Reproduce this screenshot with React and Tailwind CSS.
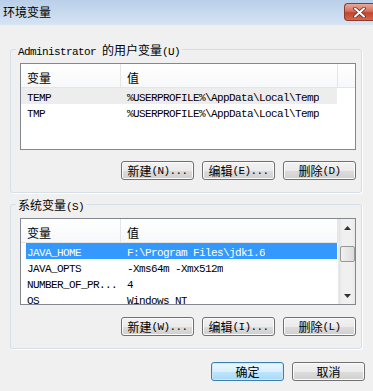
import React from 'react';

const CJK = /([\u4e00-\u9fff]+)/;

// SimSun-like mix: CJK in Noto, ASCII in a 6px-advance mono
function Mixed({ text }) {
    return text.split(CJK).map((p, i) =>
        CJK.test(p) ? (
            <span key={i} className="font-['Noto_Sans_CJK_SC',sans-serif] text-[12px]">{p}</span>
        ) : (
            p && <span key={i} className="font-['Liberation_Mono','Noto_Sans_CJK_SC',monospace] text-[11px] tracking-[-0.6px]">{p}</span>
        )
    );
}

function Btn({ label, def }) {
    return (
        <div
            className={`h-[19px] w-[73px] rounded-[3px] border flex items-center justify-center leading-[14px] text-black ${
                def
                    ? 'border-[#3c7fb1] bg-[linear-gradient(to_bottom,#eaf6fd_0%,#d9f0fc_50%,#bee6fd_50%,#a7d9f5_100%)] shadow-[inset_0_0_0_1px_#cbe8f8]'
                    : 'border-[#707070] bg-[linear-gradient(to_bottom,#f2f2f2_0%,#ebebeb_50%,#dddddd_50%,#cfcfcf_100%)] shadow-[inset_0_0_0_1px_#fcfcfc]'
            }`}
        >
            <Mixed text={label} />
        </div>
    );
}

function Header({ full }) {
    return (
        <div className="h-[24px] flex border-b border-[#e5e5e5] bg-[linear-gradient(to_bottom,#ffffff,#f7f8fa)] font-['Noto_Sans_CJK_SC',sans-serif] text-[12px] leading-[24px] text-black shrink-0">
            <div className="w-[100px] pl-[6px] pt-[2px] border-r border-[#e5e5e5]">变量</div>
            <div className="w-[217px] pl-[6px] pt-[2px] border-r border-[#e5e5e5]">值</div>
            {full && <div className="flex-1" />}
        </div>
    );
}

function Row({ name, value, mode }) {
    const bg =
        mode === 'sel'
            ? 'bg-[#3399ff] text-white ml-[5px] w-[311px]'
            : mode === 'gray'
            ? 'bg-[#ededed] text-black w-[316px]'
            : 'text-black w-[316px]';
    return (
        <div className={`h-[16px] flex items-center leading-[16px] shrink-0 ${bg}`}>
            <div className={`${mode === 'sel' ? 'w-[95px] pl-[1px]' : 'w-[100px] pl-[6px]'} whitespace-nowrap overflow-hidden`}>
                <Mixed text={name} />
            </div>
            <div className="pl-[6px] whitespace-nowrap overflow-hidden">
                <Mixed text={value} />
            </div>
        </div>
    );
}

function Scrollbar() {
    return (
        <div className="w-[17px] h-full flex flex-col items-center bg-[linear-gradient(to_right,#e3e3e3,#f0f0f0_20%,#f0f0f0_80%,#e8e8e8)] border-l border-[#e8e8e8]">
            <div className="h-[17px] w-full flex items-center justify-center">
                <svg width="7" height="4" viewBox="0 0 7 4"><path d="M0 4 L3.5 0 L7 4 Z" fill="#333" /></svg>
            </div>
            <div className="mt-[10px] h-[16px] w-[15px] rounded-[2px] border border-[#979797] bg-[linear-gradient(to_right,#f0f0f0,#dcdcdc)]" />
            <div className="flex-1" />
            <div className="h-[17px] w-full flex items-center justify-center">
                <svg width="7" height="4" viewBox="0 0 7 4"><path d="M0 0 L7 0 L3.5 4 Z" fill="#333" /></svg>
            </div>
        </div>
    );
}

export default function App() {
    return (
        <div className="w-[373px] h-[391px] bg-[#f0f0f0] overflow-hidden flex flex-col text-black">
            {/* TITLE BAR */}
            <div className="h-[25px] shrink-0 flex justify-between bg-[linear-gradient(to_bottom,#b9cfe9,#d6e4f3)]">
                <span className="pl-[3px] pt-[4px] font-['Noto_Sans_CJK_SC',sans-serif] text-[12px] leading-[16px] text-black">环境变量</span>
                <div className="mt-[3px] w-[29px] h-[18px] rounded-l-[4px] border border-r-0 border-[#8c3a2c] bg-[linear-gradient(to_bottom,#e9a99b_0%,#d7705c_45%,#c2432c_55%,#d36a4e_100%)] flex items-center justify-center">
                    <svg width="13" height="11" viewBox="0 0 13 11">
                        <path d="M2 1.5 L11 9.5 M11 1.5 L2 9.5" stroke="#6b2a20" strokeWidth="3.6" strokeLinecap="round" />
                        <path d="M2 1.5 L11 9.5 M11 1.5 L2 9.5" stroke="#ffffff" strokeWidth="2" strokeLinecap="round" />
                    </svg>
                </div>
            </div>

            {/* USER VARIABLES */}
            <fieldset className="mt-[17px] ml-[10px] w-[352px] border border-[#d5dfe5] rounded-[3px] shadow-[1px_1px_0_#ffffff] pl-[9px] pr-[5px] pb-[12px]">
                <legend className="ml-[-4px] px-[2px] leading-[14px] h-[14px]">
                    <Mixed text="Administrator 的用户变量(U)" />
                </legend>
                <div className="mt-[7px] h-[87px] w-[336px] border border-[#828790] bg-white flex flex-col overflow-hidden">
                    <Header full />
                    <Row name="TEMP" value="%USERPROFILE%\AppData\Local\Temp" mode="gray" />
                    <Row name="TMP" value="%USERPROFILE%\AppData\Local\Temp" />
                </div>
                <div className="mt-[11px] flex justify-end gap-[8px]">
                    <Btn label="新建(N)..." />
                    <Btn label="编辑(E)..." />
                    <Btn label="删除(D)" />
                </div>
            </fieldset>

            {/* SYSTEM VARIABLES */}
            <fieldset className="mt-[4px] ml-[10px] w-[352px] border border-[#d5dfe5] rounded-[3px] shadow-[1px_1px_0_#ffffff] pl-[9px] pr-[5px] pb-[12px]">
                <legend className="ml-[-4px] px-[2px] leading-[14px] h-[14px]">
                    <Mixed text="系统变量(S)" />
                </legend>
                <div className="mt-[7px] h-[87px] w-[336px] border border-[#828790] bg-white flex">
                    <div className="w-[317px] h-full flex flex-col overflow-hidden">
                        <Header />
                        <Row name="JAVA_HOME" value="F:\Program Files\jdk1.6" mode="sel" />
                        <Row name="JAVA_OPTS" value="-Xms64m -Xmx512m" />
                        <Row name="NUMBER_OF_PR..." value="4" />
                        <Row name="OS" value="Windows_NT" />
                    </div>
                    <Scrollbar />
                </div>
                <div className="mt-[12px] flex justify-end gap-[8px]">
                    <Btn label="新建(W)..." />
                    <Btn label="编辑(I)..." />
                    <Btn label="删除(L)" />
                </div>
            </fieldset>

            {/* DIALOG BUTTONS */}
            <div className="mt-[13px] pr-[8px] flex justify-end gap-[8px]">
                <Btn label="确定" def />
                <Btn label="取消" />
            </div>
        </div>
    );
}
